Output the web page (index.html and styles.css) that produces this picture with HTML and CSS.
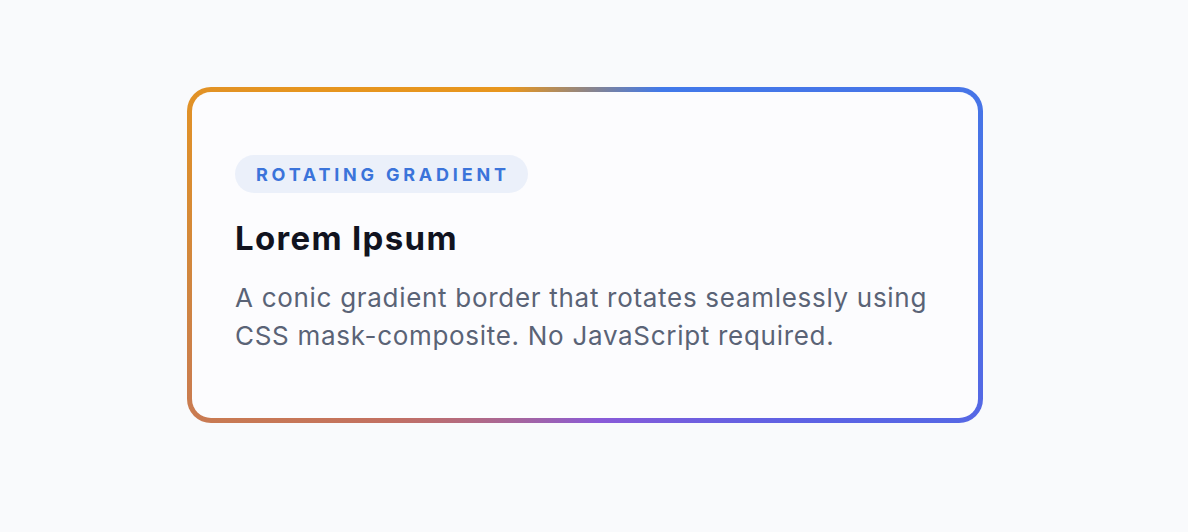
FILE: index.html
```html
<!DOCTYPE html>
<html lang="en">
<head>
<meta charset="utf-8">
<title>Rotating Gradient</title>
<link rel="stylesheet" href="styles.css">
</head>
<body>
<main class="stage">
  <div class="card-frame">
    <article class="card">
      <span class="badge">Rotating Gradient</span>
      <h2 class="title">Lorem Ipsum</h2>
      <p class="text">A conic gradient border that rotates seamlessly using CSS mask-composite. No JavaScript required.</p>
    </article>
  </div>
</main>
</body>
</html>
```
FILE: styles.css
```css
html, body {
  margin: 0;
  padding: 0;
  background: #f9fafc;
}
body {
  font-family: Inter, "Noto Sans", sans-serif;
  width: 1188px;
  height: 532px;
  overflow: hidden;
}
.stage {
  display: flex;
  padding: 87px 0 0 187px;
}
.card-frame {
  width: 796px;
  box-sizing: border-box;
  padding: 5px;
  border-radius: 24px;
  background: conic-gradient(from 0deg at 50% 50%,
    #908584 0deg,
    #4179ea 25deg,
    #4a72e6 90deg,
    #5c62e4 125deg,
    #8a5ad8 175deg,
    #c27062 230deg,
    #d08540 265deg,
    #e6951f 300deg,
    #e8961e 335deg,
    #908584 360deg);
}
.card {
  background: #fcfcfe;
  border-radius: 19px;
  padding: 63px 44px 63px 43px;
  display: flex;
  flex-direction: column;
  align-items: flex-start;
}
.badge {
  display: inline-flex;
  align-items: center;
  height: 38px;
  padding: 0 18px 0 21px;
  border-radius: 19px;
  background: #ebf0fa;
  color: #3b74da;
  font-size: 18px;
  font-weight: 700;
  letter-spacing: 0.21em;
  text-transform: uppercase;
}
.title {
  margin: 26px 0 0;
  font-size: 33px;
  line-height: 1.2;
  font-weight: 700;
  color: #11131f;
  letter-spacing: 0.04em;
}
.text {
  margin: 20px 0 0;
  font-size: 26px;
  line-height: 38px;
  letter-spacing: 0.027em;
  color: #5a6376;
}
```
